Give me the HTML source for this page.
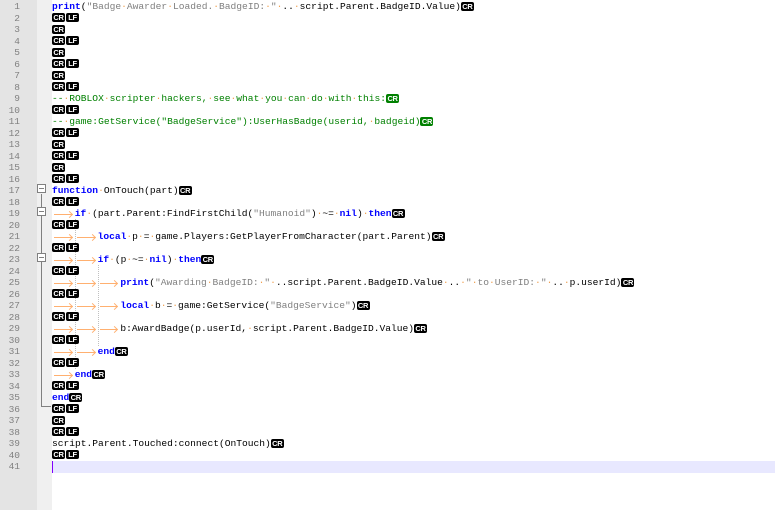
<!DOCTYPE html>
<html><head><meta charset="utf-8"><style>
*{margin:0;padding:0;box-sizing:border-box}
body{width:775px;height:510px;overflow:hidden;background:#fff;font-family:"Liberation Mono",monospace;font-size:9.6px;position:relative}
#ln{position:absolute;left:0;top:0;width:37px;height:510px;background:#e4e4e4}
#fm{position:absolute;left:37px;top:0;width:15px;height:510px;background:#f0f0f0}
.n{position:absolute;left:0;width:20px;text-align:right;color:#808080;height:11.5px;line-height:11.5px;font-size:9.5px}
.l{position:absolute;left:52px;height:11.5px;line-height:11.5px;white-space:pre;color:#000}
.k{color:#0000ff;font-weight:bold}
.s{color:#808080}
.c{color:#008000}
.d{color:#f0a050}
.b{display:inline-block;background:#000;color:#fff;font-size:7.5px;font-weight:bold;line-height:9px;height:9px;width:13px;text-align:center;border-radius:2px;vertical-align:middle;margin-right:1px;font-family:"Liberation Sans",sans-serif;letter-spacing:-0.3px}
.g{background:#008000}
.t{display:inline-block;width:22.8px;height:11px;vertical-align:top;position:relative}
.t:before{content:"";position:absolute;left:2px;right:3px;top:5.5px;border-top:1px solid #ffb070}
.t:after{content:"";position:absolute;right:3px;top:3px;width:4px;height:4px;border-top:1px solid #ffb070;border-right:1px solid #ffb070;transform:rotate(45deg);margin-top:0.5px}
.fb{position:absolute;left:37px;width:9px;height:9px;border:1px solid #808080;background:#fff}
.fb:after{content:"";position:absolute;left:1px;right:1px;top:3px;border-top:1px solid #808080}
.ig{position:absolute;width:0;border-left:1px dotted #c0c0c0}
#cur{position:absolute;left:52px;top:461px;width:723px;height:11.5px;background:#e8e8ff}
#car{position:absolute;left:52px;top:461px;width:1px;height:11.5px;background:#8000ff}
</style></head><body>
<div id="ln"></div><div id="fm"></div>
<div style="position:absolute;left:41px;top:194px;width:1px;height:213px;background:#808080"></div>
<div style="position:absolute;left:41px;top:406px;width:10px;height:1px;background:#808080"></div>
<div class="fb" style="top:184px"></div>
<div class="fb" style="top:207px"></div>
<div class="fb" style="top:253px"></div>
<div class="ig" style="left:75px;top:219px;height:150px"></div>
<div class="ig" style="left:98px;top:265px;height:81px"></div>
<div id="cur"></div><div id="car"></div>
<div class="n" style="top:1px">1</div><div class="n" style="top:12.5px">2</div><div class="n" style="top:24px">3</div><div class="n" style="top:35.5px">4</div><div class="n" style="top:47px">5</div><div class="n" style="top:58.5px">6</div><div class="n" style="top:70px">7</div><div class="n" style="top:81.5px">8</div><div class="n" style="top:93px">9</div><div class="n" style="top:104.5px">10</div><div class="n" style="top:116px">11</div><div class="n" style="top:127.5px">12</div><div class="n" style="top:139px">13</div><div class="n" style="top:150.5px">14</div><div class="n" style="top:162px">15</div><div class="n" style="top:173.5px">16</div><div class="n" style="top:185px">17</div><div class="n" style="top:196.5px">18</div><div class="n" style="top:208px">19</div><div class="n" style="top:219.5px">20</div><div class="n" style="top:231px">21</div><div class="n" style="top:242.5px">22</div><div class="n" style="top:254px">23</div><div class="n" style="top:265.5px">24</div><div class="n" style="top:277px">25</div><div class="n" style="top:288.5px">26</div><div class="n" style="top:300px">27</div><div class="n" style="top:311.5px">28</div><div class="n" style="top:323px">29</div><div class="n" style="top:334.5px">30</div><div class="n" style="top:346px">31</div><div class="n" style="top:357.5px">32</div><div class="n" style="top:369px">33</div><div class="n" style="top:380.5px">34</div><div class="n" style="top:392px">35</div><div class="n" style="top:403.5px">36</div><div class="n" style="top:415px">37</div><div class="n" style="top:426.5px">38</div><div class="n" style="top:438px">39</div><div class="n" style="top:449.5px">40</div><div class="n" style="top:461px">41</div>

<div class="l" style="top:1px"><span class="k">print</span>(<span class="s">"Badge<span class="d">·</span>Awarder<span class="d">·</span>Loaded.<span class="d">·</span>BadgeID:<span class="d">·</span>"</span><span class="d">·</span>..<span class="d">·</span>script.Parent.BadgeID.Value)<span class="b">CR</span></div>
<div class="l" style="top:12.5px"><span class="b">CR</span><span class="b">LF</span></div>
<div class="l" style="top:24px"><span class="b">CR</span></div>
<div class="l" style="top:35.5px"><span class="b">CR</span><span class="b">LF</span></div>
<div class="l" style="top:47px"><span class="b">CR</span></div>
<div class="l" style="top:58.5px"><span class="b">CR</span><span class="b">LF</span></div>
<div class="l" style="top:70px"><span class="b">CR</span></div>
<div class="l" style="top:81.5px"><span class="b">CR</span><span class="b">LF</span></div>
<div class="l c" style="top:93px">--<span class="d">·</span>ROBLOX<span class="d">·</span>scripter<span class="d">·</span>hackers,<span class="d">·</span>see<span class="d">·</span>what<span class="d">·</span>you<span class="d">·</span>can<span class="d">·</span>do<span class="d">·</span>with<span class="d">·</span>this:<span class="b g">CR</span></div>
<div class="l" style="top:104.5px"><span class="b">CR</span><span class="b">LF</span></div>
<div class="l c" style="top:116px">--<span class="d">·</span>game:GetService("BadgeService"):UserHasBadge(userid,<span class="d">·</span>badgeid)<span class="b g">CR</span></div>
<div class="l" style="top:127.5px"><span class="b">CR</span><span class="b">LF</span></div>
<div class="l" style="top:139px"><span class="b">CR</span></div>
<div class="l" style="top:150.5px"><span class="b">CR</span><span class="b">LF</span></div>
<div class="l" style="top:162px"><span class="b">CR</span></div>
<div class="l" style="top:173.5px"><span class="b">CR</span><span class="b">LF</span></div>
<div class="l" style="top:185px"><span class="k">function</span><span class="d">·</span>OnTouch(part)<span class="b">CR</span></div>
<div class="l" style="top:196.5px"><span class="b">CR</span><span class="b">LF</span></div>
<div class="l" style="top:208px"><span class="t"></span><span class="k">if</span><span class="d">·</span>(part.Parent:FindFirstChild(<span class="s">"Humanoid"</span>)<span class="d">·</span>~=<span class="d">·</span><span class="k">nil</span>)<span class="d">·</span><span class="k">then</span><span class="b">CR</span></div>
<div class="l" style="top:219.5px"><span class="b">CR</span><span class="b">LF</span></div>
<div class="l" style="top:231px"><span class="t"></span><span class="t"></span><span class="k">local</span><span class="d">·</span>p<span class="d">·</span>=<span class="d">·</span>game.Players:GetPlayerFromCharacter(part.Parent)<span class="b">CR</span></div>
<div class="l" style="top:242.5px"><span class="b">CR</span><span class="b">LF</span></div>
<div class="l" style="top:254px"><span class="t"></span><span class="t"></span><span class="k">if</span><span class="d">·</span>(p<span class="d">·</span>~=<span class="d">·</span><span class="k">nil</span>)<span class="d">·</span><span class="k">then</span><span class="b">CR</span></div>
<div class="l" style="top:265.5px"><span class="b">CR</span><span class="b">LF</span></div>
<div class="l" style="top:277px"><span class="t"></span><span class="t"></span><span class="t"></span><span class="k">print</span>(<span class="s">"Awarding<span class="d">·</span>BadgeID:<span class="d">·</span>"</span><span class="d">·</span>..script.Parent.BadgeID.Value<span class="d">·</span>..<span class="d">·</span><span class="s">"<span class="d">·</span>to<span class="d">·</span>UserID:<span class="d">·</span>"</span><span class="d">·</span>..<span class="d">·</span>p.userId)<span class="b">CR</span></div>
<div class="l" style="top:288.5px"><span class="b">CR</span><span class="b">LF</span></div>
<div class="l" style="top:300px"><span class="t"></span><span class="t"></span><span class="t"></span><span class="k">local</span><span class="d">·</span>b<span class="d">·</span>=<span class="d">·</span>game:GetService(<span class="s">"BadgeService"</span>)<span class="b">CR</span></div>
<div class="l" style="top:311.5px"><span class="b">CR</span><span class="b">LF</span></div>
<div class="l" style="top:323px"><span class="t"></span><span class="t"></span><span class="t"></span>b:AwardBadge(p.userId,<span class="d">·</span>script.Parent.BadgeID.Value)<span class="b">CR</span></div>
<div class="l" style="top:334.5px"><span class="b">CR</span><span class="b">LF</span></div>
<div class="l" style="top:346px"><span class="t"></span><span class="t"></span><span class="k">end</span><span class="b">CR</span></div>
<div class="l" style="top:357.5px"><span class="b">CR</span><span class="b">LF</span></div>
<div class="l" style="top:369px"><span class="t"></span><span class="k">end</span><span class="b">CR</span></div>
<div class="l" style="top:380.5px"><span class="b">CR</span><span class="b">LF</span></div>
<div class="l" style="top:392px"><span class="k">end</span><span class="b">CR</span></div>
<div class="l" style="top:403.5px"><span class="b">CR</span><span class="b">LF</span></div>
<div class="l" style="top:415px"><span class="b">CR</span></div>
<div class="l" style="top:426.5px"><span class="b">CR</span><span class="b">LF</span></div>
<div class="l" style="top:438px">script.Parent.Touched:connect(OnTouch)<span class="b">CR</span></div>
<div class="l" style="top:449.5px"><span class="b">CR</span><span class="b">LF</span></div>
</body></html>
